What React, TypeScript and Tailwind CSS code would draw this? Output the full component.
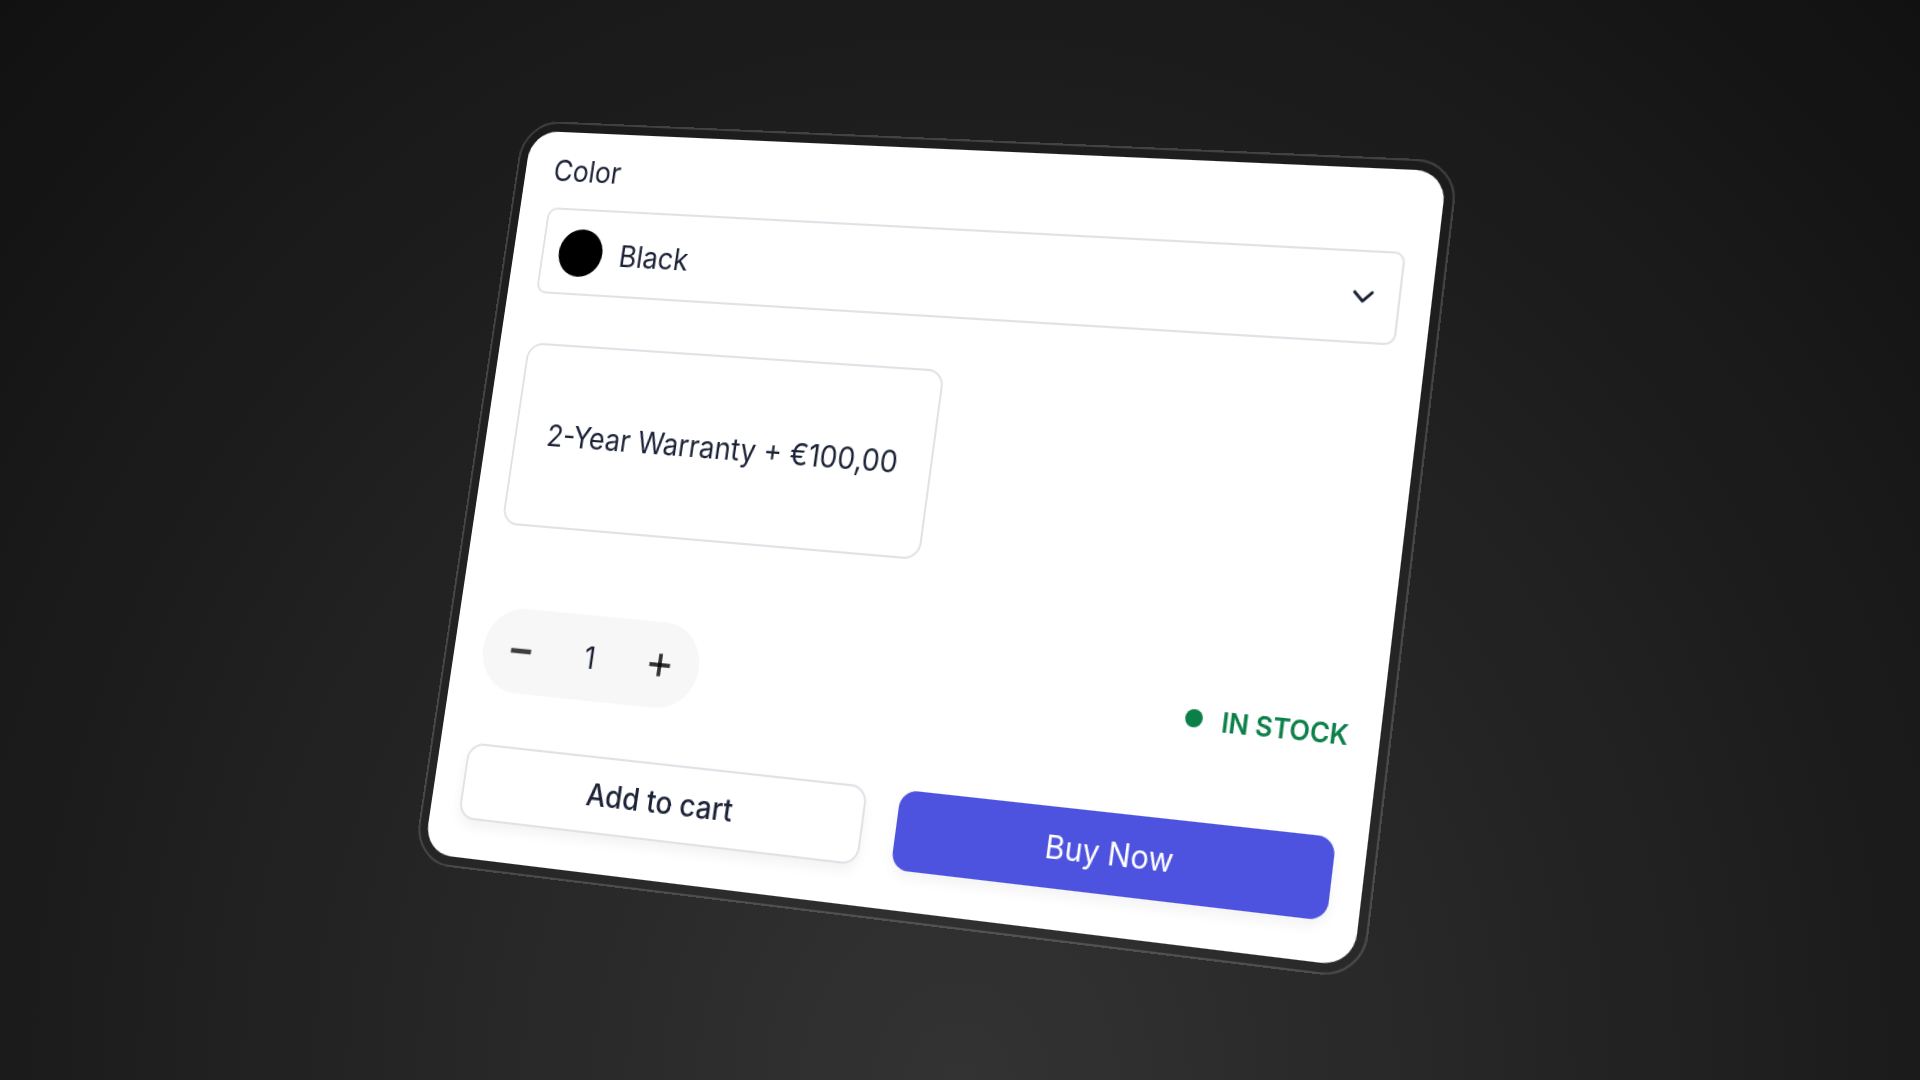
import { useState } from "react";
import { ChevronDown, Minus, Plus } from "lucide-react";

const COLORS = [
    { name: "Black", hex: "#000000" },
    { name: "Silver", hex: "#c4c8cf" },
    { name: "Blue", hex: "#3b5bdb" },
];

const ProductCard = () => {
    const [color, setColor] = useState("Black");
    const [warranty, setWarranty] = useState(false);
    const [quantity, setQuantity] = useState(1);

    const selected = COLORS.find((c) => c.name === color) || COLORS[0];

    return (
        <div className="w-[450px] rounded-[14px] bg-white pt-2 pr-[14px] pb-[18px] pl-[15px] text-[14px] leading-[21px] text-[#1c2237]">
            {/* Color */}
            <label htmlFor="color" className="mb-2 block">
                Color
            </label>
            <div className="flex h-[42px] items-center gap-[9px] rounded-[5px] border border-[#dfe2e6] px-2">
                <span
                    className="size-[23px] shrink-0 rounded-full"
                    style={{ backgroundColor: selected.hex }}
                />
                <select
                    id="color"
                    value={color}
                    onChange={(e) => setColor(e.target.value)}
                    className="flex-1 appearance-none bg-transparent outline-none"
                >
                    {COLORS.map((c) => (
                        <option key={c.name} value={c.name}>{c.name}</option>
                    ))}
                </select>
                <ChevronDown className="size-4" strokeWidth={2} />
            </div>

            {/* Warranty */}
            <button
                type="button"
                aria-pressed={warranty}
                onClick={() => setWarranty(!warranty)}
                className="mt-6 flex h-[88px] items-center rounded-[8px] border border-[#dfe2e6] px-4 pb-px"
            >
                2-Year Warranty + €100,00
            </button>

            {/* Quantity and stock */}
            <div className="mt-[39px] flex items-center justify-between">
                <div className="grid h-10 grid-cols-[40px_32px_40px] items-center justify-items-center rounded-full bg-[#f7f7f7]">
                    <button
                        type="button"
                        aria-label="Decrease quantity"
                        onClick={() => setQuantity(Math.max(1, quantity - 1))}
                    >
                        <Minus className="size-[18px] text-black/75" strokeWidth={3} strokeLinecap="butt" />
                    </button>
                    <span className="pb-px">{quantity}</span>
                    <button
                        type="button"
                        aria-label="Increase quantity"
                        onClick={() => setQuantity(quantity + 1)}
                    >
                        <Plus className="size-[18px] text-black/80" strokeWidth={2.5} strokeLinecap="butt" />
                    </button>
                </div>
                <div className="flex items-center gap-[9px] text-[12px] font-semibold text-[#0b7f48]">
                    <span className="size-2 rounded-full bg-[#0b7f48]" />
                    IN STOCK
                </div>
            </div>

            {/* Actions */}
            <div className="mt-[25px] grid grid-cols-[203px_1fr] gap-4">
                <button
                    type="button"
                    className="h-9 rounded-[8px] border border-[#dfe2e6] bg-white pb-[2px] font-medium shadow-[0_3px_6px_rgba(0,0,0,0.05)]"
                >
                    Add to cart
                </button>
                <button
                    type="button"
                    className="h-9 rounded-[8px] bg-[#4e53df] pb-[2px] text-white shadow-[0_3px_6px_rgba(0,0,0,0.05)]"
                >
                    Buy Now
                </button>
            </div>
        </div>
    );
};

const App = () => {
    return (
        <main className="flex min-h-screen items-center justify-center overflow-hidden bg-[radial-gradient(ellipse_at_bottom,#333333,#111111)] font-['Inter',sans-serif]">
            <div className="rounded-[19px] border border-white/16 p-1 [transform:translateY(1px)_scale(2.207)_perspective(1720px)_translate(-19px,-8px)_rotateX(10deg)_rotateY(-20deg)_rotateZ(8deg)]">
                <ProductCard />
            </div>
        </main>
    );
};

export default App;
